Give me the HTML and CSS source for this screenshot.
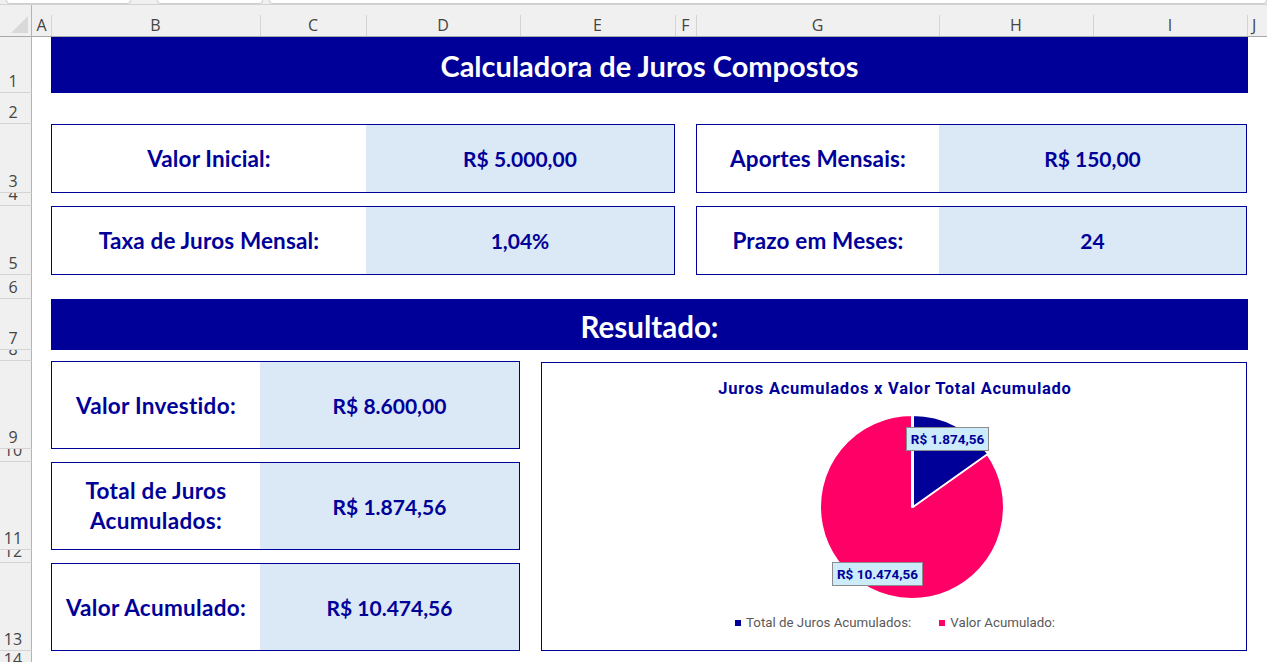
FILE: index.html
```html
<!DOCTYPE html>
<html lang="pt-BR">
<head>
<meta charset="utf-8">
<title>Calculadora de Juros Compostos</title>
<link rel="stylesheet" href="styles.css">
</head>
<body>
<div class="topbar">
  <div class="tb tb-name"></div>
  <div class="tb tb-fx"></div>
  <div class="tb tb-formula"></div>
</div>
<div class="sheet">
  <div class="corner"><span class="tri"></span></div>
  <div class="colhdr c-a">A</div>
  <div class="colhdr c-b sep">B</div>
  <div class="colhdr c-c sep">C</div>
  <div class="colhdr c-d sep">D</div>
  <div class="colhdr c-e sep">E</div>
  <div class="colhdr c-f sep">F</div>
  <div class="colhdr c-g sep">G</div>
  <div class="colhdr c-h sep">H</div>
  <div class="colhdr c-i sep">I</div>
  <div class="colhdr c-j sep">J</div>

  <div class="rowhdr r1">1</div>
  <div class="rowhdr r2">2</div>
  <div class="rowhdr r3">3</div>
  <div class="rowhdr r4">4</div>
  <div class="rowhdr r5">5</div>
  <div class="rowhdr r6">6</div>
  <div class="rowhdr r7">7</div>
  <div class="rowhdr r8">8</div>
  <div class="rowhdr r9">9</div>
  <div class="rowhdr r10">10</div>
  <div class="rowhdr r11">11</div>
  <div class="rowhdr r12">12</div>
  <div class="rowhdr r13">13</div>
  <div class="rowhdr r14">14</div>

  <div class="banner banner-title">Calculadora de Juros Compostos</div>

  <div class="box box-tl">
    <div class="lbl lbl-wide">Valor Inicial:</div>
    <div class="val">R$ 5.000,00</div>
  </div>
  <div class="box box-tr">
    <div class="lbl lbl-g">Aportes Mensais:</div>
    <div class="val">R$ 150,00</div>
  </div>
  <div class="box box-ml">
    <div class="lbl lbl-wide">Taxa de Juros Mensal:</div>
    <div class="val">1,04%</div>
  </div>
  <div class="box box-mr">
    <div class="lbl lbl-g">Prazo em Meses:</div>
    <div class="val">24</div>
  </div>

  <div class="banner banner-res">Resultado:</div>

  <div class="box box-r1">
    <div class="lbl lbl-b">Valor Investido:</div>
    <div class="val">R$ 8.600,00</div>
  </div>
  <div class="box box-r2">
    <div class="lbl lbl-b two">Total de Juros<br>Acumulados:</div>
    <div class="val">R$ 1.874,56</div>
  </div>
  <div class="box box-r3">
    <div class="lbl lbl-b">Valor Acumulado:</div>
    <div class="val">R$ 10.474,56</div>
  </div>

  <div class="chart">
    <div class="chart-title">Juros Acumulados x Valor Total Acumulado</div>
    <div class="plot">
      <svg class="pie" width="705" height="205" viewBox="0 0 705 205" xmlns="http://www.w3.org/2000/svg">
        <path d="M370 108 L445.04 54.78 A92 92 0 1 1 370 16 Z" fill="#ff0066" stroke="#ffffff" stroke-width="2" stroke-linejoin="round"/>
        <path d="M371 108 L371 16 A92 92 0 0 1 446.04 54.78 Z" fill="#000099" stroke="#ffffff" stroke-width="2" stroke-linejoin="round"/>
      </svg>
      <div class="dlabel dl-1">R$ 1.874,56</div>
      <div class="dlabel dl-2">R$ 10.474,56</div>
    </div>
    <div class="legend">
      <div class="leg-item"><span class="sw sw-navy"></span>Total de Juros Acumulados:</div>
      <div class="leg-item"><span class="sw sw-pink"></span>Valor Acumulado:</div>
    </div>
  </div>
</div>
</body>
</html>
```

FILE: styles.css
```css
* { box-sizing: border-box; }

html, body {
  margin: 0;
  padding: 0;
  background: #ffffff;
  width: 1267px;
  height: 662px;
  overflow: hidden;
}

body {
  font-family: "Lato", "Liberation Sans", sans-serif;
}

/* ---------- formula bar remnants ---------- */
.topbar {
  display: flex;
  height: 5px;
  background: #f0f0f0;
  border-bottom: 1px solid #d2d2d2;
}
.tb {
  height: 4px;
  background: #ffffff;
  border: 1px solid #cfcfcf;
  border-top: none;
  border-radius: 0 0 4px 4px;
}
.tb-name { margin-left: 6px; width: 125px; }
.tb-fx { margin-left: 26px; width: 106px; }
.tb-formula { margin-left: 6px; flex: 1; }

/* ---------- sheet grid ---------- */
.sheet {
  display: grid;
  grid-template-columns: 32px 19px 209px 106px 154px 155px 21px 243px 154px 154px 1fr;
  grid-template-rows: 32px 56px 31px 69px 13px 69px 24px 51px 11px 88px 13px 88px 13px 88px 20px;
}

.corner {
  grid-column: 1;
  grid-row: 1;
  background: #f0f0f0;
  border-right: 1px solid #b4b4b4;
  border-bottom: 1px solid #a8a8a8;
  display: flex;
  justify-content: flex-end;
  align-items: flex-end;
  padding: 0 3px 3px 0;
}
.tri {
  width: 0;
  height: 0;
  border-left: 17px solid transparent;
  border-bottom: 17px solid #d9d9d9;
}

.colhdr {
  grid-row: 1;
  background-color: #f0f0f0;
  border-bottom: 1px solid #a8a8a8;
  font-family: "Open Sans", "Liberation Sans", sans-serif;
  font-size: 16px;
  line-height: 20px;
  color: #444444;
  display: flex;
  justify-content: center;
  align-items: flex-end;
  padding-bottom: 1px;
}
.colhdr.sep {
  background-image: linear-gradient(#d4d4d4, #d4d4d4);
  background-size: 1px calc(100% - 10px);
  background-position: left bottom;
  background-repeat: no-repeat;
}
.c-a { grid-column: 2; }
.c-b { grid-column: 3; }
.c-c { grid-column: 4; }
.c-d { grid-column: 5; }
.c-e { grid-column: 6; }
.c-f { grid-column: 7; }
.c-g { grid-column: 8; }
.c-h { grid-column: 9; }
.c-i { grid-column: 10; }
.c-j { grid-column: 11; justify-content: flex-start; padding-left: 5px; }

.rowhdr {
  grid-column: 1;
  background: #f0f0f0;
  border-right: 1px solid #b4b4b4;
  border-bottom: 1px solid #d4d4d4;
  font-family: "Open Sans", "Liberation Sans", sans-serif;
  font-size: 16px;
  line-height: 20px;
  color: #444444;
  display: flex;
  justify-content: center;
  align-items: flex-end;
  padding: 0 5px 1px 0;
  overflow: hidden;
}
.r1 { grid-row: 2; }
.r2 { grid-row: 3; }
.r3 { grid-row: 4; }
.r4 { grid-row: 5; }
.r5 { grid-row: 6; }
.r6 { grid-row: 7; }
.r7 { grid-row: 8; }
.r8 { grid-row: 9; }
.r9 { grid-row: 10; }
.r10 { grid-row: 11; }
.r11 { grid-row: 12; }
.r12 { grid-row: 13; }
.r13 { grid-row: 14; }
.r14 { grid-row: 15; }

/* ---------- banners ---------- */
.banner {
  grid-column: 3 / 11;
  background: #000099;
  color: #ffffff;
  font-weight: 700;
  display: flex;
  align-items: center;
  justify-content: center;
  margin-right: -1px;
}
.banner-title {
  grid-row: 2;
  font-size: 29px;
}
.banner-res {
  grid-row: 8;
  font-size: 29.5px;
  padding-top: 3px;
}

/* ---------- input / result boxes ---------- */
.box {
  display: flex;
  border: 1px solid #000099;
  color: #000099;
  font-weight: 700;
  font-size: 21px;
}
.box-tl { grid-column: 3 / 7; grid-row: 4; }
.box-tr { grid-column: 8 / 11; grid-row: 4; }
.box-ml { grid-column: 3 / 7; grid-row: 6; }
.box-mr { grid-column: 8 / 11; grid-row: 6; }
.box-r1 { grid-column: 3 / 6; grid-row: 10; }
.box-r2 { grid-column: 3 / 6; grid-row: 12; }
.box-r3 { grid-column: 3 / 6; grid-row: 14; }

.lbl {
  display: flex;
  align-items: center;
  justify-content: center;
  text-align: center;
  background: #ffffff;
  font-size: 22.5px;
  letter-spacing: 0.15px;
}
.lbl-wide { width: 314px; }
.lbl-g { width: 242px; }
.lbl-b { width: 208px; letter-spacing: 0.3px; }
.two { line-height: 30px; }

.val {
  flex: 1;
  display: flex;
  align-items: center;
  justify-content: center;
  background: #dbe8f6;
}

/* ---------- chart ---------- */
.chart {
  grid-column: 6 / 11;
  grid-row: 10 / 15;
  margin: 1px 0 0 21px;
  border: 1px solid #000099;
  background: #ffffff;
  display: flex;
  flex-direction: column;
  font-family: "Roboto", "Liberation Sans", sans-serif;
}
.chart-title {
  margin-top: 16px;
  line-height: 20px;
  text-align: center;
  font-size: 16.5px;
  font-weight: 700;
  letter-spacing: 0.75px;
  color: #000099;
  padding-left: 2px;
}
.plot {
  position: relative;
  height: 204px;
}
.pie { display: block; }
.dlabel {
  position: absolute;
  height: 24px;
  background: #ccecfc;
  border: 1px solid #8c8c8c;
  color: #000099;
  font-weight: 700;
  font-size: 13.5px;
  line-height: 22px;
  text-align: center;
}
.dl-1 { left: 364px; top: 28px; width: 83px; }
.dl-2 { left: 290px; top: 163px; width: 91px; }

.legend {
  margin-top: 12px;
  display: flex;
  justify-content: center;
  gap: 28px;
  padding-left: 2px;
  font-size: 13.3px;
  line-height: 16px;
  color: #595959;
}
.leg-item {
  display: flex;
  align-items: center;
}
.sw {
  width: 6px;
  height: 6px;
  margin-right: 5px;
}
.sw-navy { background: #000099; }
.sw-pink { background: #ff0066; }
```
